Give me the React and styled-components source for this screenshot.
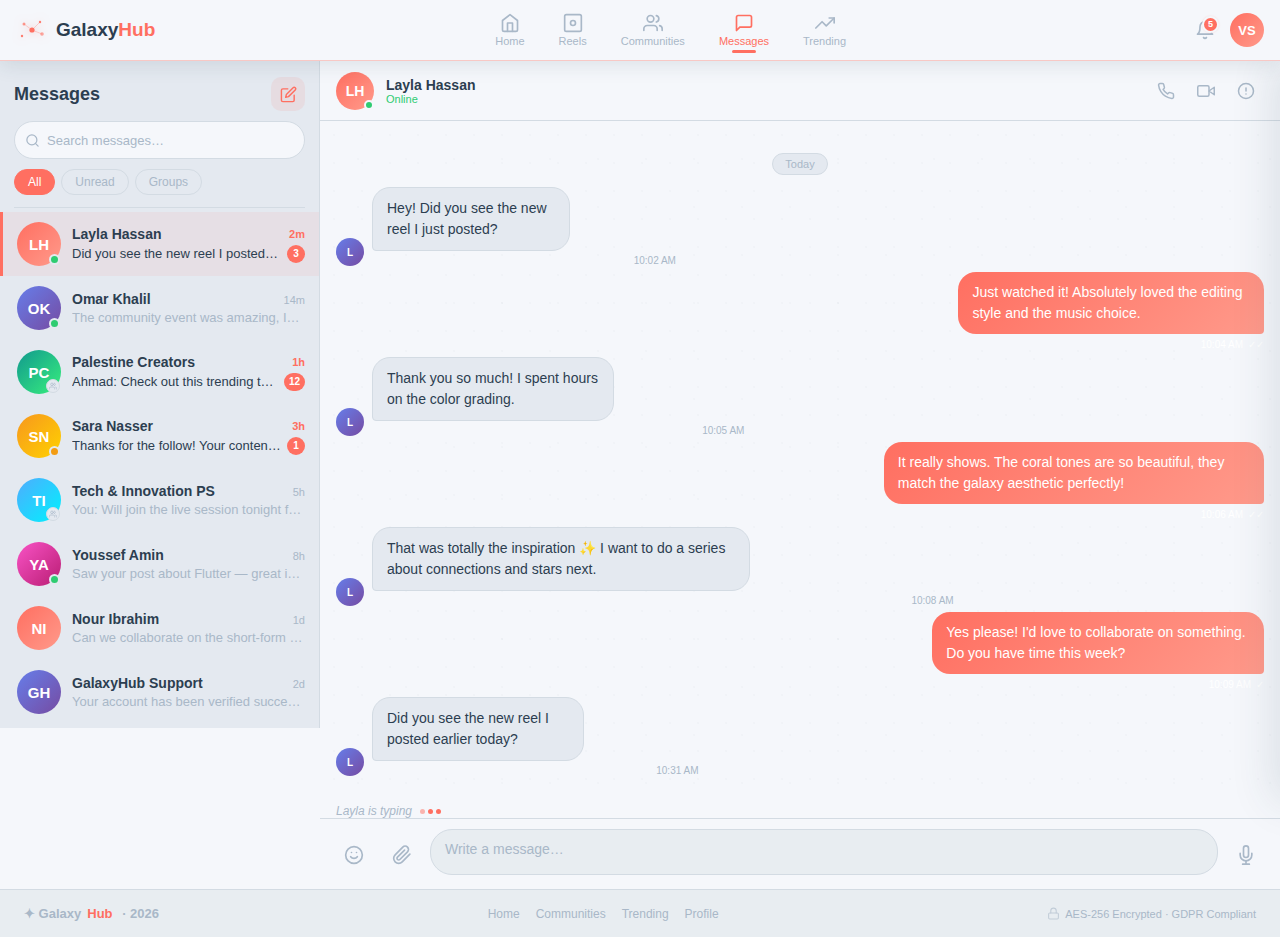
import styled, { createGlobalStyle } from "styled-components";
import {
    FiAlertCircle,
    FiBell,
    FiEdit,
    FiHome,
    FiLock,
    FiMessageSquare,
    FiMic,
    FiPaperclip,
    FiPhone,
    FiSearch,
    FiSmile,
    FiTrendingUp,
    FiUsers,
    FiVideo,
} from "react-icons/fi";

const colors = {
    bg: "#f5f7fb",
    panel: "#e4e9f0",
    field: "#e8edf1",
    border: "#d3dbe3",
    text: "#2c3e50",
    muted: "#a9b8c8",
    coral: "#ff6f61",
    green: "#2ecc71",
    orange: "#f39c12",
};

const gradients = {
    coral: "linear-gradient(135deg, #ff6f61, #ff9a8b)",
    purple: "linear-gradient(135deg, #667eea, #764ba2)",
    green: "linear-gradient(135deg, #11998e, #38ef7d)",
    yellow: "linear-gradient(135deg, #f7971e, #ffd200)",
    blue: "linear-gradient(135deg, #4facfe, #00f2fe)",
    pink: "linear-gradient(135deg, #f953c6, #b91d73)",
};

const GlobalStyle = createGlobalStyle`
    * {
        box-sizing: border-box;
    }
    body {
        margin: 0;
        background: ${colors.bg};
        color: ${colors.text};
        font-family: "Liberation Sans", Arial, sans-serif;
        font-size: 14px;
    }
    button, input, textarea {
        font-family: inherit;
        margin: 0;
    }
    button {
        cursor: pointer;
        border: none;
        background: none;
        padding: 0;
    }
    a {
        color: inherit;
        text-decoration: none;
    }
    h1, h2, p {
        margin: 0;
    }
`;

const Page = styled.div`
    min-height: 100vh;
    display: flex;
    flex-direction: column;
    overflow: hidden;
`;

const Header = styled.header`
    position: relative;
    z-index: 2;
    height: 61px;
    padding: 0 16px;
    display: flex;
    align-items: center;
    justify-content: space-between;
    background: ${colors.bg};
    border-bottom: 1px solid rgba(255, 111, 97, 0.35);
    box-shadow: 0 4px 20px rgba(44, 62, 80, 0.12);
`;

const Logo = styled.a`
    display: flex;
    align-items: center;
    gap: 8px;
    font-size: 19px;
    font-weight: bold;
    svg {
        filter: drop-shadow(0 0 4px rgba(255, 111, 97, 0.5));
    }
`;

const Coral = styled.span`
    color: ${colors.coral};
`;

const Nav = styled.nav`
    display: flex;
    gap: 34px;
`;

const NavLink = styled.a`
    position: relative;
    display: flex;
    flex-direction: column;
    align-items: center;
    gap: 2px;
    font-size: 11px;
    line-height: 13px;
    color: ${(props) => (props.$active ? colors.coral : colors.muted)};
    svg {
        width: 20px;
        height: 20px;
    }
    &::after {
        content: "";
        display: ${(props) => (props.$active ? "block" : "none")};
        position: absolute;
        bottom: -5px;
        width: 24px;
        height: 3px;
        border-radius: 2px;
        background: ${colors.coral};
    }
`;

const HeaderRight = styled.div`
    display: flex;
    align-items: center;
    gap: 6px;
`;

const IconButton = styled.button`
    position: relative;
    width: ${(props) => props.$width || 36}px;
    height: ${(props) => props.$height || 36}px;
    display: flex;
    align-items: center;
    justify-content: center;
    color: ${colors.muted};
    svg {
        width: ${(props) => props.$icon || 18}px;
        height: ${(props) => props.$icon || 18}px;
    }
`;

const BellBadge = styled.span`
    position: absolute;
    top: 5px;
    right: 5px;
    width: 17px;
    height: 17px;
    border: 2px solid ${colors.bg};
    border-radius: 50%;
    background: ${colors.coral};
    box-shadow: 0 0 2px rgba(255, 111, 97, 0.2);
    color: white;
    font-size: 9px;
    font-weight: bold;
    line-height: 13px;
    text-align: center;
`;

const AvatarBase = styled.span`
    position: relative;
    flex: none;
    width: ${(props) => props.$size}px;
    height: ${(props) => props.$size}px;
    border-radius: 50%;
    display: flex;
    align-items: center;
    justify-content: center;
    background: ${(props) => gradients[props.$tone]};
    color: white;
    font-size: ${(props) => props.$font}px;
    font-weight: bold;
`;

const StatusDot = styled.span`
    position: absolute;
    right: ${(props) => props.$inset}px;
    bottom: ${(props) => props.$inset}px;
    width: ${(props) => props.$size}px;
    height: ${(props) => props.$size}px;
    border: 2px solid ${(props) => props.$ring};
    border-radius: 50%;
    background: ${(props) => (props.$away ? colors.orange : colors.green)};
`;

const GroupBadge = styled.span`
    position: absolute;
    right: 1px;
    bottom: 1px;
    width: 14px;
    height: 14px;
    display: flex;
    align-items: center;
    justify-content: center;
    border: 1px solid ${colors.border};
    border-radius: 50%;
    background: ${colors.panel};
    color: ${colors.muted};
    svg {
        width: 8px;
        height: 8px;
    }
`;

const Main = styled.main`
    flex: 1;
    display: flex;
    align-items: stretch;
`;

const Sidebar = styled.aside`
    align-self: flex-start;
    flex: none;
    width: 320px;
    background: ${colors.panel};
    border-right: 1px solid ${colors.border};
`;

const SidebarTop = styled.div`
    margin: 0 14px;
    padding: 16px 0 12px;
    display: flex;
    flex-direction: column;
    gap: 10px;
    border-bottom: 1px solid ${colors.border};
`;

const TitleRow = styled.div`
    display: flex;
    align-items: center;
    justify-content: space-between;
`;

const Title = styled.h1`
    font-size: 18px;
`;

const ComposeButton = styled(IconButton)`
    border-radius: 10px;
    background: rgba(255, 111, 97, 0.1);
    color: ${colors.coral};
`;

const SearchBox = styled.label`
    height: 38px;
    padding: 0 10px;
    display: flex;
    align-items: center;
    gap: 7px;
    border: 1px solid ${colors.border};
    border-radius: 19px;
    background: ${colors.bg};
    color: ${colors.muted};
    svg {
        flex: none;
        width: 15px;
        height: 15px;
    }
`;

const SearchInput = styled.input`
    flex: 1;
    min-width: 0;
    padding: 0;
    border: none;
    outline: none;
    background: none;
    font-size: 13px;
    color: ${colors.text};
    &::placeholder {
        color: ${colors.muted};
    }
`;

const Filters = styled.div`
    display: flex;
    gap: 6px;
`;

const Filter = styled.button`
    height: 26px;
    padding: 0 13px;
    border: 1px solid ${(props) => (props.$active ? colors.coral : colors.border)};
    border-radius: 13px;
    background: ${(props) => (props.$active ? colors.coral : "transparent")};
    color: ${(props) => (props.$active ? "white" : colors.muted)};
    font-size: 12px;
`;

const ChatList = styled.div`
    padding: 4px 0;
`;

const ChatItem = styled.button`
    width: 100%;
    padding: 10px 14px;
    display: flex;
    align-items: center;
    gap: 11px;
    text-align: left;
    border-left: 3px solid ${(props) => (props.$active ? colors.coral : "transparent")};
    background: ${(props) => (props.$active ? "rgba(255, 111, 97, 0.08)" : "none")};
`;

const ChatInfo = styled.span`
    flex: 1;
    min-width: 0;
    display: flex;
    flex-direction: column;
    gap: 2px;
`;

const ChatRow = styled.span`
    display: flex;
    align-items: center;
    justify-content: space-between;
    gap: 6px;
`;

const ChatName = styled.span`
    font-size: 14px;
    font-weight: bold;
    line-height: 17px;
    color: ${colors.text};
`;

const ChatTime = styled.span`
    font-size: 11px;
    font-weight: ${(props) => (props.$unread ? "bold" : "normal")};
    color: ${(props) => (props.$unread ? colors.coral : colors.muted)};
`;

const Preview = styled.span`
    overflow: hidden;
    white-space: nowrap;
    text-overflow: ellipsis;
    font-size: 13px;
    line-height: 15px;
    color: ${(props) => (props.$unread ? colors.text : colors.muted)};
`;

const UnreadBadge = styled.span`
    flex: none;
    min-width: 18px;
    height: 18px;
    padding: 0 5px;
    border-radius: 9px;
    background: ${colors.coral};
    color: white;
    font-size: 10px;
    font-weight: bold;
    line-height: 18px;
    text-align: center;
`;

const Conversation = styled.section`
    position: relative;
    flex: 1;
    min-width: 0;
    display: flex;
    flex-direction: column;
`;

/* closed info drawer, only its shadow reaches into the page */
const Drawer = styled.div`
    position: absolute;
    top: 0;
    bottom: 88px;
    left: 100%;
    width: 300px;
    pointer-events: none;
    box-shadow: -8px 0 40px rgba(44, 62, 80, 0.12);
`;

const ConversationHeader = styled.div`
    height: 60px;
    padding: 0 16px;
    display: flex;
    align-items: center;
    gap: 12px;
    border-bottom: 1px solid ${colors.border};
`;

const Contact = styled.div`
    flex: 1;
`;

const ContactName = styled.h2`
    padding-top: 1px;
    font-size: 14px;
    line-height: 16px;
`;

const ContactStatus = styled.p`
    font-size: 11px;
    line-height: 12px;
    color: ${colors.green};
`;

const Actions = styled.div`
    display: flex;
    gap: ${(props) => props.$gap}px;
`;

const Messages = styled.div`
    flex: 1;
    padding: 32px 16px 20px;
    display: flex;
    flex-direction: column;
    gap: 6px;
    background-image:
        radial-gradient(circle, rgba(44, 62, 80, 0.02) 1px, transparent 1px),
        radial-gradient(circle, rgba(44, 62, 80, 0.02) 1px, transparent 1px);
    background-size: 28px 28px, 48px 48px;
    background-position: 0 0, 14px 14px;
`;

const DayLabel = styled.div`
    align-self: center;
    height: 22px;
    margin-bottom: 6px;
    padding: 0 12px;
    border: 1px solid ${colors.border};
    border-radius: 11px;
    background: ${colors.panel};
    color: ${colors.muted};
    font-size: 11px;
    line-height: 20px;
`;

const MessageRow = styled.div`
    display: flex;
    align-items: flex-end;
    gap: 8px;
    justify-content: ${(props) => (props.$sent ? "flex-end" : "flex-start")};
`;

const MessageColumn = styled.div`
    display: flex;
    flex-direction: column;
    align-items: ${(props) => (props.$sent ? "flex-end" : "flex-start")};
    gap: 4px;
`;

const Bubble = styled.p`
    max-width: 65%;
    padding: 10px 14px;
    border: ${(props) => (props.$sent ? "none" : `1px solid ${colors.border}`)};
    border-radius: ${(props) => (props.$sent ? "18px 18px 4px 18px" : "18px 18px 18px 4px")};
    background: ${(props) => (props.$sent ? gradients.coral : colors.panel)};
    color: ${(props) => (props.$sent ? "white" : colors.text)};
    font-size: 14px;
    line-height: 21px;
`;

const MessageTime = styled.span`
    align-self: flex-end;
    display: flex;
    gap: 5px;
    font-size: 10px;
    line-height: ${(props) => (props.$sent ? 13 : 11)}px;
    color: ${(props) => (props.$sent ? "white" : colors.muted)};
`;

const Typing = styled.div`
    height: 18px;
    padding: 4px 16px 0;
    display: flex;
    align-items: center;
    gap: 8px;
    color: ${colors.muted};
    font-size: 12px;
    font-style: italic;
    line-height: 14px;
`;

const TypingDots = styled.span`
    display: flex;
    gap: 3px;
`;

const TypingDot = styled.span`
    width: 5px;
    height: 5px;
    border-radius: 50%;
    background: ${colors.coral};
    opacity: ${(props) => (props.$faded ? 0.5 : 1)};
`;

const Composer = styled.form`
    padding: 10px 16px 14px;
    display: flex;
    align-items: flex-end;
    gap: 10px;
    border-top: 1px solid ${colors.border};
`;

const MessageInput = styled.textarea`
    flex: 1;
    min-width: 0;
    height: 46px;
    padding: 9px 14px;
    border: 1px solid ${colors.border};
    border-radius: 22px;
    outline: none;
    resize: none;
    background: ${colors.field};
    color: ${colors.text};
    font-size: 14px;
    line-height: 20px;
    &::placeholder {
        color: ${colors.muted};
    }
`;

const Footer = styled.footer`
    position: relative;
    height: 48px;
    padding: 0 24px;
    display: flex;
    align-items: center;
    justify-content: space-between;
    border-top: 1px solid ${colors.border};
    background: ${colors.field};
    color: ${colors.muted};
    font-size: 12px;
`;

const FooterBrand = styled.div`
    display: flex;
    gap: 6px;
    font-size: 13px;
    font-weight: bold;
    white-space: pre;
`;

const FooterLinks = styled.nav`
    display: flex;
    gap: 16px;
`;

const Security = styled.div`
    display: flex;
    align-items: center;
    gap: 5px;
    font-size: 11px;
    svg {
        width: 13px;
        height: 13px;
        opacity: 0.6;
    }
`;

const navItems = [
    { label: "Home", icon: <FiHome /> },
    { label: "Reels", icon: <ReelsIcon /> },
    { label: "Communities", icon: <FiUsers /> },
    { label: "Messages", icon: <FiMessageSquare />, active: true },
    { label: "Trending", icon: <FiTrendingUp /> },
];

const chats = [
    { initials: "LH", name: "Layla Hassan", time: "2m", text: "Did you see the new reel I posted earlier today?", tone: "coral", status: "online", unread: 3, active: true },
    { initials: "OK", name: "Omar Khalil", time: "14m", text: "The community event was amazing, Inshallah we do it again", tone: "purple", status: "online" },
    { initials: "PC", name: "Palestine Creators", time: "1h", text: "Ahmad: Check out this trending topic everyone", tone: "green", group: true, unread: 12 },
    { initials: "SN", name: "Sara Nasser", time: "3h", text: "Thanks for the follow! Your content is great", tone: "yellow", status: "away", unread: 1 },
    { initials: "TI", name: "Tech & Innovation PS", time: "5h", text: "You: Will join the live session tonight for sure", tone: "blue", group: true },
    { initials: "YA", name: "Youssef Amin", time: "8h", text: "Saw your post about Flutter — great insights there", tone: "pink", status: "online" },
    { initials: "NI", name: "Nour Ibrahim", time: "1d", text: "Can we collaborate on the short-form video series?", tone: "coral" },
    { initials: "GH", name: "GalaxyHub Support", time: "2d", text: "Your account has been verified successfully", tone: "purple" },
];

const messages = [
    { text: "Hey! Did you see the new reel I just posted?", time: "10:02 AM" },
    { text: "Just watched it! Absolutely loved the editing style and the music choice.", time: "10:04 AM", sent: true, ticks: "✓✓" },
    { text: "Thank you so much! I spent hours on the color grading.", time: "10:05 AM" },
    { text: "It really shows. The coral tones are so beautiful, they match the galaxy aesthetic perfectly!", time: "10:06 AM", sent: true, ticks: "✓✓" },
    { text: "That was totally the inspiration ✨ I want to do a series about connections and stars next.", time: "10:08 AM" },
    { text: "Yes please! I'd love to collaborate on something. Do you have time this week?", time: "10:09 AM", sent: true, ticks: "✓" },
    { text: "Did you see the new reel I posted earlier today?", time: "10:31 AM" },
];

function LogoMark() {
    return (
        <svg width="32" height="32" viewBox="0 0 32 32" fill={colors.coral} aria-hidden="true">
            <g stroke={colors.coral} strokeWidth="0.6" opacity="0.5">
                <line x1="16" y1="16" x2="8" y2="10" />
                <line x1="16" y1="16" x2="24" y2="8" />
                <line x1="16" y1="16" x2="26" y2="20" />
            </g>
            <circle cx="16" cy="16" r="2.6" />
            <circle cx="8" cy="10" r="1.5" opacity="0.7" />
            <circle cx="24" cy="8" r="1.2" opacity="0.9" />
            <circle cx="6" cy="22" r="1.2" opacity="0.9" />
            <circle cx="26" cy="20" r="1.8" opacity="0.6" />
        </svg>
    );
}

function ReelsIcon() {
    return (
        <svg viewBox="0 0 24 24" fill="none" stroke="currentColor" strokeWidth="2" aria-hidden="true">
            <rect x="2" y="2" width="20" height="20" rx="2" />
            <circle cx="12" cy="12" r="3" />
        </svg>
    );
}

function Chat({ initials, name, time, text, tone, status, group, unread, active }) {
    return (
        <ChatItem type="button" $active={active}>
            <AvatarBase $size={44} $font={15} $tone={tone}>
                {initials}
                {status && <StatusDot $size={11} $inset={1} $ring={colors.panel} $away={status === "away"} />}
                {group && <GroupBadge><FiUsers /></GroupBadge>}
            </AvatarBase>
            <ChatInfo>
                <ChatRow>
                    <ChatName>{name}</ChatName>
                    <ChatTime $unread={unread}>{time}</ChatTime>
                </ChatRow>
                <ChatRow>
                    <Preview $unread={unread}>{text}</Preview>
                    {unread && <UnreadBadge>{unread}</UnreadBadge>}
                </ChatRow>
            </ChatInfo>
        </ChatItem>
    );
}

function Message({ text, time, sent, ticks }) {
    return (
        <MessageRow $sent={sent}>
            {!sent && <AvatarBase $size={28} $font={10} $tone="purple">L</AvatarBase>}
            <MessageColumn $sent={sent}>
                <Bubble $sent={sent}>{text}</Bubble>
                <MessageTime $sent={sent}>
                    {time}
                    {ticks && <span>{ticks}</span>}
                </MessageTime>
            </MessageColumn>
        </MessageRow>
    );
}

function App() {
    return (
        <Page>
            <GlobalStyle />
            <Header>
                <Logo href="#">
                    <LogoMark />
                    <span>Galaxy<Coral>Hub</Coral></span>
                </Logo>
                <Nav>
                    {navItems.map(({ label, icon, active }) => (
                        <NavLink key={label} href="#" $active={active}>
                            {icon}
                            {label}
                        </NavLink>
                    ))}
                </Nav>
                <HeaderRight>
                    <IconButton type="button" aria-label="Notifications" $width={38} $height={38} $icon={20}>
                        <FiBell />
                        <BellBadge>5</BellBadge>
                    </IconButton>
                    <AvatarBase $size={34} $font={13} $tone="coral">VS</AvatarBase>
                </HeaderRight>
            </Header>
            <Main>
                <Sidebar>
                    <SidebarTop>
                        <TitleRow>
                            <Title>Messages</Title>
                            <ComposeButton type="button" aria-label="New message" $width={34} $height={34} $icon={17}>
                                <FiEdit />
                            </ComposeButton>
                        </TitleRow>
                        <SearchBox>
                            <FiSearch />
                            <SearchInput type="text" aria-label="Search messages" placeholder="Search messages…" />
                        </SearchBox>
                        <Filters>
                            <Filter type="button" $active>All</Filter>
                            <Filter type="button">Unread</Filter>
                            <Filter type="button">Groups</Filter>
                        </Filters>
                    </SidebarTop>
                    <ChatList>
                        {chats.map((chat) => <Chat key={chat.name} {...chat} />)}
                    </ChatList>
                </Sidebar>
                <Conversation>
                    <ConversationHeader>
                        <AvatarBase $size={38} $font={14} $tone="coral">
                            LH
                            <StatusDot $size={10} $inset={0} $ring={colors.bg} />
                        </AvatarBase>
                        <Contact>
                            <ContactName>Layla Hassan</ContactName>
                            <ContactStatus>Online</ContactStatus>
                        </Contact>
                        <Actions $gap={4}>
                            <IconButton type="button" aria-label="Call"><FiPhone /></IconButton>
                            <IconButton type="button" aria-label="Video call"><FiVideo /></IconButton>
                            <IconButton type="button" aria-label="Info"><FiAlertCircle /></IconButton>
                        </Actions>
                    </ConversationHeader>
                    <Messages>
                        <DayLabel>Today</DayLabel>
                        {messages.map((message) => <Message key={message.time} {...message} />)}
                    </Messages>
                    <Typing>
                        Layla is typing
                        <TypingDots>
                            <TypingDot $faded />
                            <TypingDot />
                            <TypingDot />
                        </TypingDots>
                    </Typing>
                    <Composer>
                        <Actions $gap={12}>
                            <IconButton type="button" aria-label="Emoji" $height={40} $icon={20}><FiSmile /></IconButton>
                            <IconButton type="button" aria-label="Attach file" $height={40} $icon={20}><FiPaperclip /></IconButton>
                        </Actions>
                        <MessageInput aria-label="Message" placeholder="Write a message…" />
                        <IconButton type="button" aria-label="Record" $height={40} $icon={20}><FiMic /></IconButton>
                    </Composer>
                    <Drawer />
                </Conversation>
            </Main>
            <Footer>
                <FooterBrand>
                    <span>✦ Galaxy</span>
                    <Coral>Hub</Coral>
                    <span>{" · 2026"}</span>
                </FooterBrand>
                <FooterLinks>
                    <a href="#">Home</a>
                    <a href="#">Communities</a>
                    <a href="#">Trending</a>
                    <a href="#">Profile</a>
                </FooterLinks>
                <Security>
                    <FiLock />
                    AES-256 Encrypted · GDPR Compliant
                </Security>
            </Footer>
        </Page>
    );
}

export default App;
